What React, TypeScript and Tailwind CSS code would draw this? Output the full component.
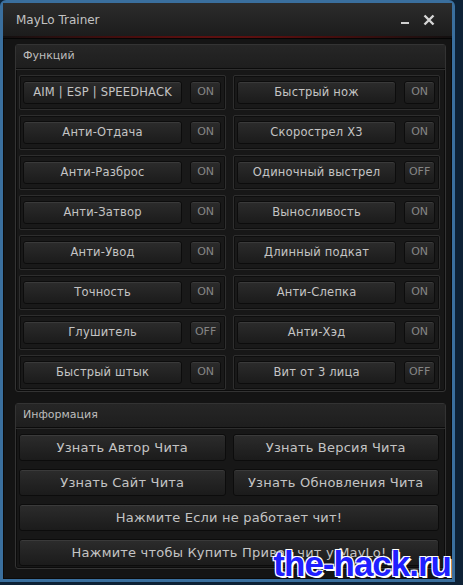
const rows: [string, string, string, string][] = [
  ["AIM | ESP | SPEEDHACK", "ON", "Быстрый нож", "ON"],
  ["Анти-Отдача", "ON", "Скорострел X3", "ON"],
  ["Анти-Разброс", "ON", "Одиночный выстрел", "OFF"],
  ["Анти-Затвор", "ON", "Выносливость", "ON"],
  ["Анти-Увод", "ON", "Длинный подкат", "ON"],
  ["Точность", "ON", "Анти-Слепка", "ON"],
  ["Глушитель", "OFF", "Анти-Хэд", "ON"],
  ["Быстрый штык", "ON", "Вит от 3 лица", "OFF"],
]

const btn =
  "flex items-center justify-center rounded-[3px] border border-[#0c0c0c] bg-gradient-to-b from-[#2c2c2c] to-[#1b1b1b] shadow-[inset_0_1px_0_#3a3a3a]"

function Cell({ label, state }: { label: string; state: string }) {
  return (
    <div className="flex h-[35px] items-center gap-2 rounded-[2px] border border-[#2e2e2e] bg-[#191919] pl-[3px] pr-[4px] shadow-[inset_0_0_0_1px_#0e0e0e]">
      <div className={`${btn} h-[23px] w-[160px] text-[11.5px] tracking-[0.2px] text-[#c4c4c4]`}>{label}</div>
      <div className={`${btn} h-[23px] w-[31px] text-[11px] text-[#858585]`}>{state}</div>
    </div>
  )
}

function GroupHeader({ title }: { title: string }) {
  return (
    <div className="flex h-[24px] items-center border-b border-[#0b0b0b] bg-gradient-to-b from-[#262626] to-[#1e1e1e] px-[7px] text-[11px] text-[#bdbdbd] shadow-[0_1px_0_#2e2e2e]">
      {title}
    </div>
  )
}

export default function App() {
  return (
    <div
      className="relative h-[585px] w-[463px] overflow-hidden bg-[#0e2236]"
      style={{ fontFamily: '"DejaVu Sans", Verdana, sans-serif' }}
    >
      <div className="absolute inset-0 mb-[3px] mr-[8px] rounded-t-[6px] border-[3px] border-[#3a6f9e] bg-[#141414] shadow-[inset_0_0_0_1px_#0a0a0a]">
        {/* title bar */}
        <div className="relative flex h-[33px] items-center justify-between bg-gradient-to-b from-[#2c2c2c] to-[#1c1c1c] pl-[13px] pr-[17px]">
          <span className="text-[12px] text-[#c2c2c2]">MayLo Trainer</span>
          <div className="flex items-center gap-[14px]">
            <span className="mt-[6px] block h-[2px] w-[8px] bg-[#cfcfcf]" />
            <svg width="12" height="12" viewBox="0 0 12 12">
              <path d="M1.5 1.5 L10.5 10.5 M10.5 1.5 L1.5 10.5" stroke="#d6d6d6" strokeWidth="2.4" />
            </svg>
          </div>
        </div>
        <div className="h-[2px] bg-[radial-gradient(ellipse_at_center,#a11a1a_0%,#4a0d0d_45%,#101010_80%)]" />
        <div className="h-[1px] bg-[#050505]" />

        <div className="flex flex-col gap-[11px] pl-[12px] pr-[6px] pt-[5px]">
          {/* functions group */}
          <div className="h-[348px] rounded-[3px] border border-[#333] bg-[#171717] shadow-[inset_0_0_0_1px_#0c0c0c]">
            <GroupHeader title="Функций" />
            <div className="flex flex-col gap-[5px] pl-[3px] pr-[5px] pt-[6px]">
              {rows.map(([a, sa, b, sb]) => (
                <div key={a} className="grid grid-cols-2 gap-[7px]">
                  <Cell label={a} state={sa} />
                  <Cell label={b} state={sb} />
                </div>
              ))}
            </div>
          </div>

          {/* info group */}
          <div className="h-[166px] rounded-[3px] border border-[#333] bg-[#171717] shadow-[inset_0_0_0_1px_#0c0c0c]">
            <GroupHeader title="Информация" />
            <div className="flex flex-col gap-[8px] pl-[3px] pr-[6px] pt-[6px] text-[13px] tracking-[0.2px] text-[#c4c4c4]">
              <div className="grid grid-cols-2 gap-[7px]">
                <div className={`${btn} h-[27px]`}>Узнать Автор Чита</div>
                <div className={`${btn} h-[27px]`}>Узнать Версия Чита</div>
              </div>
              <div className="grid grid-cols-2 gap-[7px]">
                <div className={`${btn} h-[27px]`}>Узнать Сайт Чита</div>
                <div className={`${btn} h-[27px]`}>Узнать Обновления Чита</div>
              </div>
              <div className={`${btn} h-[27px]`}>Нажмите Если не работает чит!</div>
              <div className={`${btn} h-[27px]`}>Нажмите чтобы Купить Приват чит у MayLo!</div>
            </div>
          </div>
        </div>
      </div>

      {/* watermark */}
      <div
        className="absolute bottom-[4px] right-[12px] text-[35px] font-bold leading-none tracking-[-1px] text-[#1f1fff] [text-shadow:-1px_-1px_0_#fff,1px_-1px_0_#fff,-1px_1px_0_#fff,1px_1px_0_#fff,2px_2px_0_#fff]"
        style={{ fontFamily: '"Liberation Sans", Arial, sans-serif' }}
      >
        the-hack.ru
      </div>
    </div>
  )
}
